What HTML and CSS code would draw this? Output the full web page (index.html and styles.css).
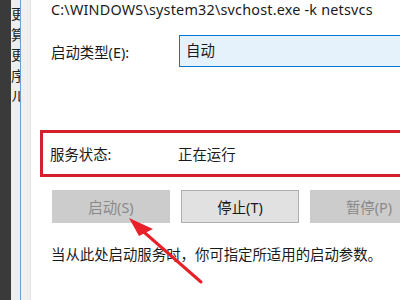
FILE: index.html
```html
<!DOCTYPE html>
<html>
<head>
  <title>服务属性</title>
  <meta name="viewport" content="width=device-width, initial-scale=1">
  <link rel="stylesheet" href="styles.css">
</head>
<body>
  <div class="window">
    <div class="dark-edge"></div>
    <div class="side-list">
      <span>更</span><span>算</span><span>更</span><span>序</span><span>ル</span>
    </div>
    <div class="dialog-edge"></div>

    <div class="dialog">
      <p class="path">C:\WINDOWS\system32\svchost.exe -k netsvcs</p>

      <div class="row start-type">
        <span class="label">启动类型(E):</span>
        <div class="combo">自动</div>
      </div>

      <div class="row status">
        <span class="label">服务状态:</span>
        <span class="value">正在运行</span>
      </div>

      <div class="buttons">
        <button class="button disabled">启动(S)</button>
        <button class="button">停止(T)</button>
        <button class="button disabled">暂停(P)</button>
      </div>

      <p class="hint">当从此处启动服务时，你可指定所适用的启动参数。</p>
    </div>

    <!-- annotation arrow -->
    <svg class="arrow" width="400" height="300" viewBox="0 0 400 300">
      <line x1="201" y1="282" x2="137" y2="226" stroke="#e8202a" stroke-width="3" stroke-linecap="round"/>
      <polygon points="129,218 153,229 139,236" fill="#e8202a"/>
    </svg>
  </div>
</body>
</html>
```

FILE: styles.css
```css
body { margin: 0; font-family: "Noto Sans", "Noto Sans CJK SC", sans-serif; color: #1a1a1a; }
.window { position: relative; display: flex; width: 400px; height: 300px; overflow: hidden; background: #fff; }
.dark-edge { width: 11px; background: #3a3a3a; flex-shrink: 0; }
.side-list {
  width: 9px;
  flex-shrink: 0;
  background: #eeeeee;
  display: flex;
  flex-direction: column;
  font-size: 14px;
  line-height: 20.5px;
  padding-top: 4px;
  overflow: hidden;
  color: #222;
  border-right: 1px solid #6a9ed8;
}
.side-list span { display: block; width: 14px; }
.dialog-edge { width: 9px; flex-shrink: 0; background: #f0f0f0; border-right: 1px solid #e4e4e4; }
.dialog { flex: 1; padding: 0 0 0 20px; font-size: 14.4px; }
.path { margin: 0; height: 22px; line-height: 20px; font-size: 14.4px; letter-spacing: 0.2px; }
.row { display: flex; align-items: center; }
.label { width: 128px; flex-shrink: 0; }
.start-type { margin-top: 13px; height: 32px; }
.combo {
  flex: 1;
  height: 30px;
  line-height: 30px;
  padding-left: 6px;
  background: #e5f1fb;
  border: 1px solid #0078d7;
  border-right: none;
}
.status {
  margin: 63px 0 0 -11px;
  padding-left: 7px;
  height: 41px;
  border: 3px solid #d4202c;
  border-right: none;
}
.buttons { display: flex; gap: 11px; margin-top: 13px; margin-left: 1px; }
.button {
  width: 118px;
  height: 33px;
  flex-shrink: 0;
  font-family: inherit;
  font-size: 14.4px;
  color: #1a1a1a;
  background: #e1e1e1;
  border: 1px solid #adadad;
  padding: 0;
}
.button.disabled { background: #cccccc; border-color: #cccccc; color: #8a8a8a; }
.hint { margin: 20px 0 0; line-height: 24px; }
.arrow { position: absolute; left: 0; top: 0; pointer-events: none; }
```
